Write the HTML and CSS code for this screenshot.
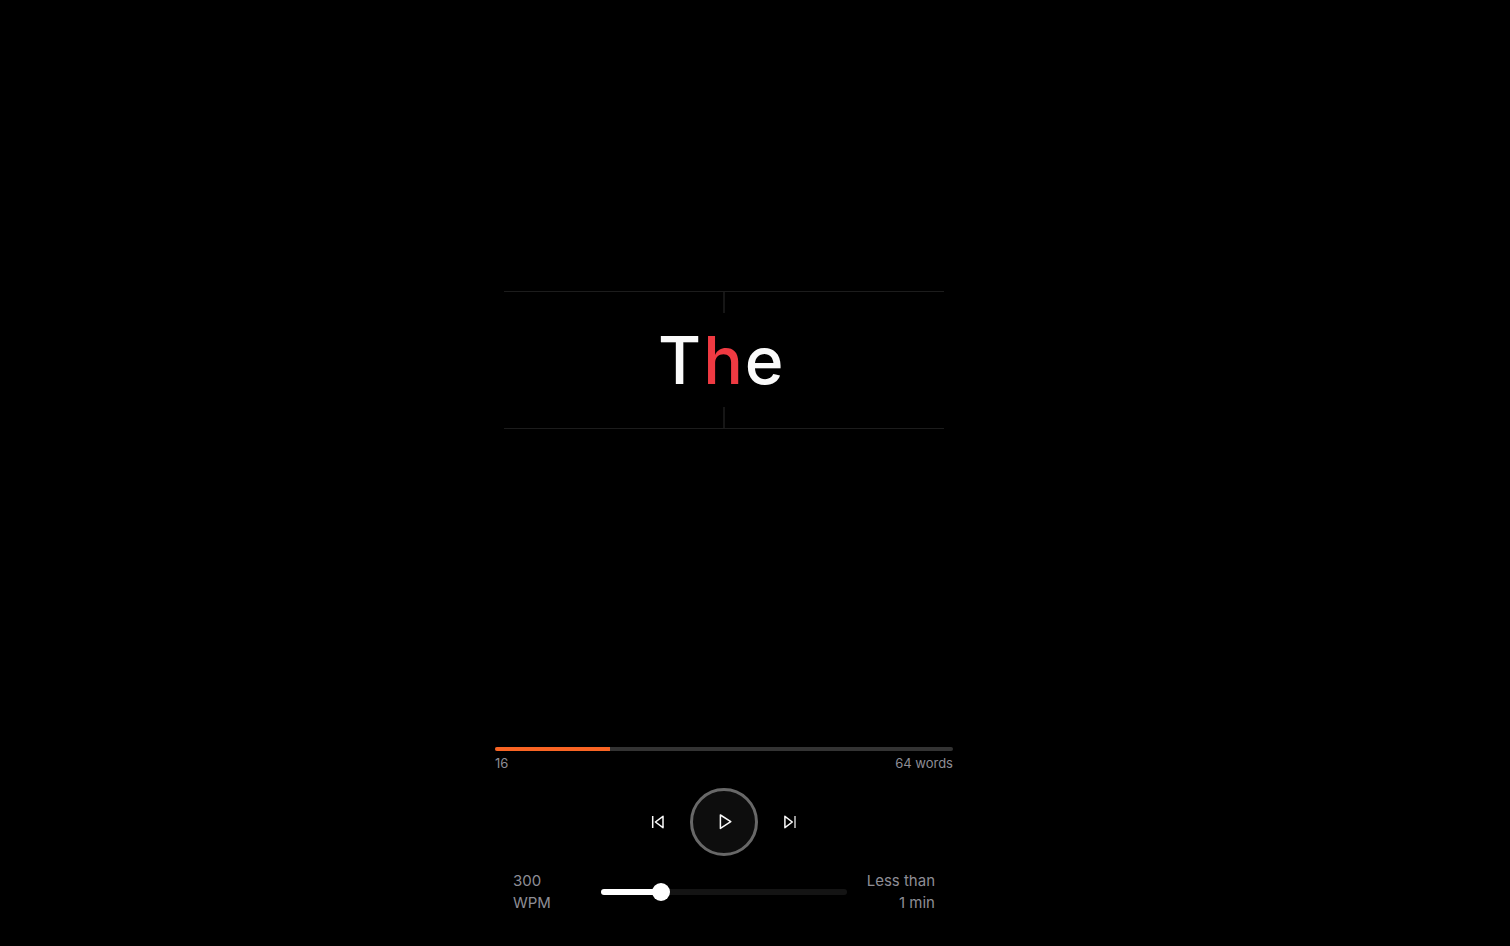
FILE: index.html
```html
<!DOCTYPE html>
<html lang="en">
<head>
<meta charset="utf-8">
<meta name="viewport" content="width=device-width, initial-scale=1">
<title>Speed reader</title>
<link rel="stylesheet" href="styles.css">
</head>
<body>
<main class="reader">
  <section class="stage">
    <div class="frame">
      <span class="tick"></span>
      <div class="word"><span class="before">T</span><span class="pivot">h</span><span class="after">e</span></div>
      <span class="tick"></span>
    </div>
  </section>
  <section class="controls">
    <div class="progress" role="progressbar" aria-label="Words read" aria-valuemin="0" aria-valuemax="64" aria-valuenow="16">
      <div class="progress-fill" style="width: 25%"></div>
    </div>
    <div class="counts"><span>16</span><span>64 words</span></div>
    <div class="buttons">
      <button class="skip" type="button" aria-label="Previous">
        <svg width="20" height="20" viewBox="0 0 20 20"><path d="M4.7 4v12M15 4.3v11.4L7.4 10z"/></svg>
      </button>
      <button class="play" type="button" aria-label="Play">
        <svg width="20" height="20" viewBox="0 0 20 20"><path d="M6.4 3v13.4L16.8 9.7z"/></svg>
      </button>
      <button class="skip" type="button" aria-label="Next">
        <svg width="20" height="20" viewBox="0 0 20 20"><path d="M4.9 4.3v11.4L12.3 10z"/><path class="bar" d="M15 4v12"/></svg>
      </button>
    </div>
    <div class="speed">
      <label class="rate" for="wpm">300 WPM</label>
      <input class="slider" id="wpm" type="range" min="100" max="1000" step="10" value="300">
      <span class="remaining">Less than 1 min</span>
    </div>
  </section>
</main>
</body>
</html>
```
FILE: styles.css
```css
* {
  box-sizing: border-box;
}

body {
  margin: 0;
  background: #000;
  color: #fafafa;
  font-family: Inter, "Liberation Sans", sans-serif;
}

.reader {
  display: flex;
  flex-direction: column;
  align-items: center;
  min-height: 100vh;
  padding: 0 62px 32px 0;
}

.stage {
  display: flex;
  flex: 1;
  align-items: center;
  justify-content: center;
  width: 100%;
  padding: 0 16px 27px;
}

.frame {
  display: flex;
  flex-direction: column;
  align-items: center;
  justify-content: space-between;
  width: 100%;
  max-width: 440px;
  border: solid #1c1c1c;
  border-width: 1px 0;
}

.tick {
  width: 2px;
  height: 21px;
  background: #161616;
}

.word {
  display: grid;
  grid-template-columns: 1fr auto 1fr;
  gap: 2px;
  width: 100%;
  padding-right: 2px;
  font-size: 66px;
  font-weight: 500;
  line-height: 94px;
}

.before {
  text-align: right;
}

.pivot {
  color: #ef3a42;
}

.controls {
  width: 100%;
  max-width: 458px;
}

.progress {
  height: 4px;
  overflow: hidden;
  border-radius: 2px;
  background: #333;
}

.progress-fill {
  height: 100%;
  background: #f96423;
}

.counts {
  display: flex;
  justify-content: space-between;
  padding-top: 3px;
  color: #8e8e96;
  font-size: 13px;
  line-height: 18px;
}

.buttons {
  display: flex;
  align-items: center;
  justify-content: center;
  gap: 10px;
  padding: 16px 0 14px;
}

.skip,
.play {
  display: flex;
  align-items: center;
  justify-content: center;
  padding: 0;
  border: 0;
  background: none;
  color: #fafafa;
}

.skip {
  width: 44px;
  height: 44px;
}

.play {
  width: 68px;
  height: 68px;
  border: 3px solid #686868;
  border-radius: 50%;
  background: #0d0d0d;
}

svg {
  fill: none;
  stroke: currentColor;
  stroke-width: 1.5;
  stroke-linejoin: round;
}

.bar {
  stroke: #ccc;
}

.speed {
  display: grid;
  grid-template-columns: 70px 1fr 70px;
  align-items: center;
  gap: 18px;
  padding: 0 18px;
  color: #8e8e96;
  font-size: 15px;
  line-height: 22px;
}

.rate {
  width: min-content;
}

.remaining {
  text-align: right;
}

.slider {
  width: 100%;
  height: 18px;
  margin: 0;
  appearance: none;
  background: none;
}

.slider::-webkit-slider-runnable-track {
  height: 6px;
  border-radius: 3px;
  background: linear-gradient(to right, #fff 24%, #141414 24%);
}

.slider::-webkit-slider-thumb {
  width: 18px;
  height: 18px;
  margin-top: -6px;
  appearance: none;
  border-radius: 50%;
  background: #fff;
}
```
